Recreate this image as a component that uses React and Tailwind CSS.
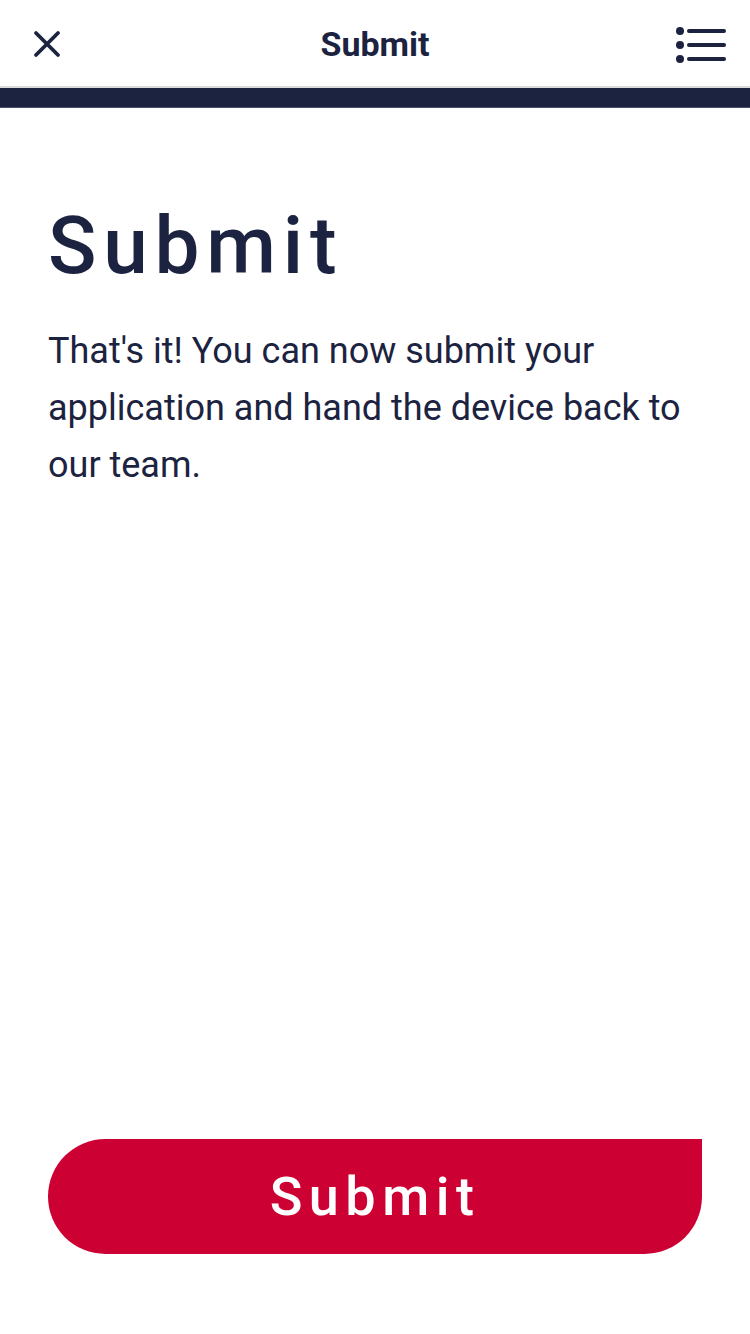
import React from "react";

function CloseIcon() {
  return (
    <svg width="30" height="30" viewBox="0 0 30 30" fill="none">
      <path d="M4 4 L26 26 M26 4 L4 26" stroke="#1c2340" strokeWidth="3.8" strokeLinecap="round" />
    </svg>
  );
}

function ListIcon() {
  return (
    <svg width="54" height="40" viewBox="0 0 54 40" fill="#1c2340">
      <circle cx="6" cy="6" r="4" />
      <circle cx="6" cy="20" r="4" />
      <circle cx="6" cy="34" r="4" />
      <rect x="13" y="4" width="39" height="4" rx="2" />
      <rect x="13" y="18" width="39" height="4" rx="2" />
      <rect x="13" y="32" width="39" height="4" rx="2" />
    </svg>
  );
}

export default function App() {
  return (
    <div
      className="w-[750px] h-[1334px] bg-white flex flex-col text-[#1c2340]"
      style={{ fontFamily: "Roboto, 'Noto Sans', sans-serif" }}
    >
      {/* Top bar */}
      <header className="h-[88px] flex items-center justify-between pl-[32px] pr-[22px] border-b-2 border-[#dcdcdc] shrink-0">
        <div className="w-[60px] flex items-center mt-[2px]">
          <CloseIcon />
        </div>
        <h1 className="text-[34px] font-bold mt-[2px]">Submit</h1>
        <div className="w-[70px] flex justify-end mt-[4px]">
          <ListIcon />
        </div>
      </header>
      <div className="h-[20px] bg-[#1c2340] border-b border-[#4a5168] shrink-0" />

      {/* Content */}
      <main className="flex-1 flex flex-col px-12">
        <h2 className="mt-[98px] text-[80px] leading-none font-medium tracking-[0.085em]">
          Submit
        </h2>
        <p className="mt-[37px] text-[36px] leading-[57px]">
          That's it! You can now submit your application and hand the device back to our team.
        </p>

        <button className="mt-auto mb-[80px] h-[115px] w-full bg-[#cc0033] text-white text-[54px] font-medium tracking-[0.12em] rounded-l-[58px] rounded-br-[58px] rounded-tr-none">
          Submit
        </button>
      </main>
    </div>
  );
}
